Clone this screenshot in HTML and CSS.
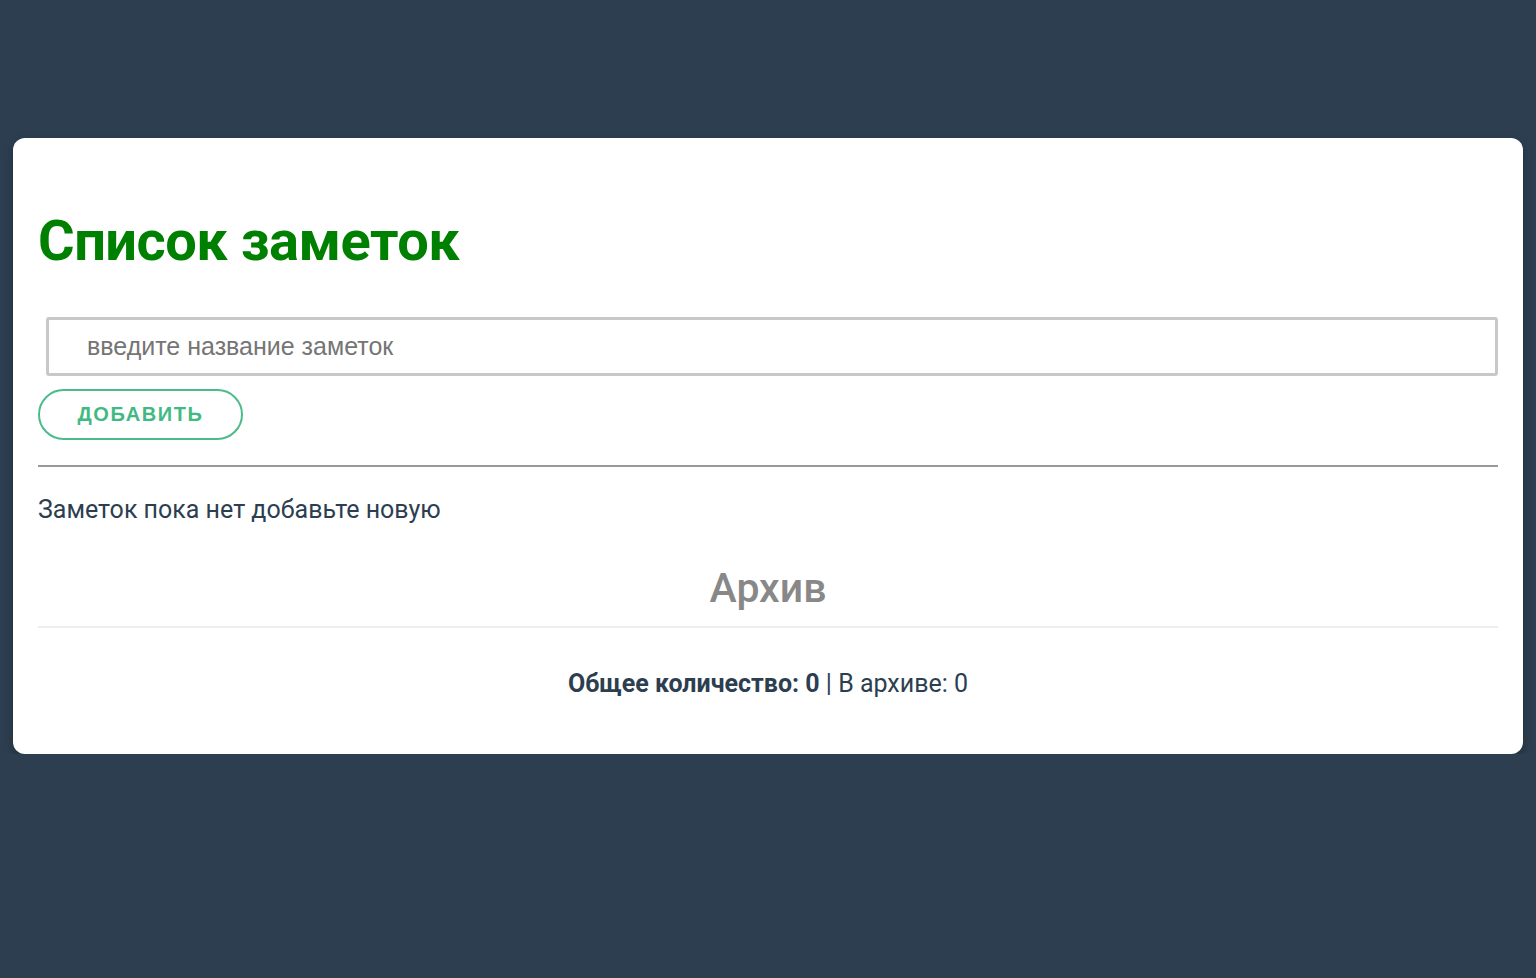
FILE: index.html
```html
<!DOCTYPE html>
<html lang="ru">
<head>
<meta charset="utf-8">
<title>Список заметок</title>
<link rel="stylesheet" href="styles.css">
</head>
<body>
<div class="page">
  <div class="card">
    <h1 class="title">Список заметок</h1>
    <div class="form">
      <input class="field" type="text" placeholder="введите название заметок">
      <button class="btn" type="button">Добавить</button>
    </div>
    <hr class="divider">
    <p class="empty">Заметок пока нет добавьте новую</p>
    <h2 class="archive">Архив</h2>
    <p class="stats"><strong>Общее количество: 0</strong> | В архиве: 0</p>
  </div>
</div>
</body>
</html>
```
FILE: styles.css
```css
html, body {
  margin: 0;
  padding: 0;
  background: #2c3e50;
  font-family: Roboto, "Noto Sans", sans-serif;
  color: #2c3e50;
}
.page {
  padding: 138px 13px 0 13px;
}
.card {
  background: #fff;
  border-radius: 12px;
  box-shadow: 0 4px 10px rgba(0,0,0,0.25);
  padding: 68px 25px 54px 25px;
}
.title {
  margin: 0;
  font-size: 56px;
  line-height: 70px;
  font-weight: 700;
  color: #008000;
  letter-spacing: -0.5px;
}
.form {
  display: flex;
  flex-direction: column;
  align-items: flex-start;
  margin-top: 41px;
}
.field {
  box-sizing: border-box;
  width: calc(100% - 8px);
  margin-left: 8px;
  height: 59px;
  border: 3px solid #c8c8c8;
  border-radius: 3px;
  padding: 0 38px;
  font-family: "Liberation Sans", Arial, sans-serif;
  font-size: 25px;
  color: #333;
  outline: none;
}
.field::placeholder {
  color: #757575;
}
.btn {
  margin-top: 13px;
  width: 205px;
  height: 51px;
  border: 2px solid #4cbb8a;
  border-radius: 26px;
  background: #fff;
  color: #42b983;
  font-family: "Liberation Sans", Arial, sans-serif;
  font-weight: 700;
  font-size: 20px;
  letter-spacing: 1.6px;
  text-transform: uppercase;
}
.divider {
  margin: 25px 0 0 0;
  border: 0;
  border-top: 2px solid #999;
}
.empty {
  margin: 27px 0 0 0;
  font-size: 25px;
  line-height: 32px;
}
.archive {
  margin: 38px 0 0 0;
  padding-bottom: 14px;
  text-align: center;
  font-size: 41px;
  line-height: 48px;
  font-weight: 500;
  color: #888;
  border-bottom: 2px solid #eee;
}
.stats {
  margin: 40px 0 0 0;
  text-align: center;
  font-size: 25px;
  line-height: 32px;
}
.stats strong {
  font-weight: 700;
}
```
